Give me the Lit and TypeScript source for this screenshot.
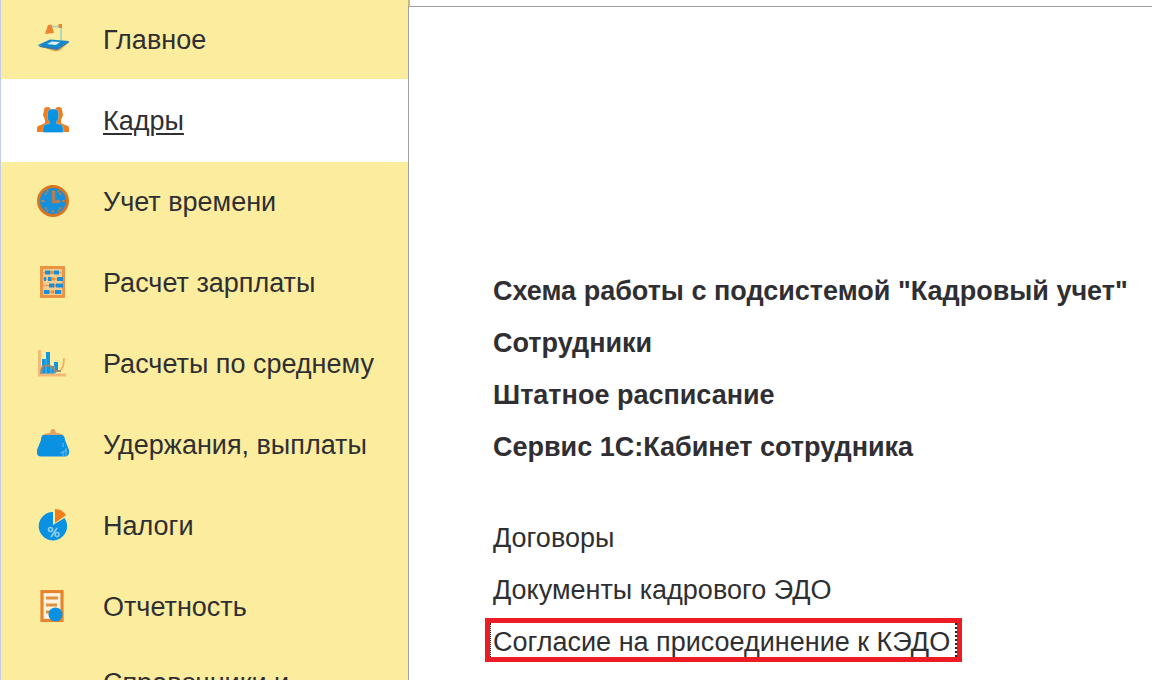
import { LitElement, html, svg, css } from "lit";
import { customElement, property, state } from "lit/decorators.js";

const icons: Record<string, unknown> = {
  main: svg`
    <path d="M2 23 18 28.500 23 27.500 31 20 24 23Z" fill="#d9a45a"/>
    <path d="M1 22 13 16.500 32 18 20 26Z" fill="#1488cf"/>
    <path d="M1 22 20 25.500 32 18V19.500L20 27 3 24Z" fill="#2a78a9"/>
    <path d="M10 21 15 18.500 23 19 19 22Z" fill="#dff2fb"/>
    <path d="M14 3.500H24V17" fill="none" stroke="#a3d0bd" stroke-width="1.600"/>
    <path d="M11 2 14.500 1.500 17 10 8 11Z" fill="#ea8433"/>
    <rect x="21.500" y="1" width="3.500" height="4" fill="#e88a35"/>`,
  people: svg`
    <path d="M7 6Q7 3 10.500 3Q14 3 14 7V15L16 18V28H0V24Q0 21.500 4 21L8 19V16L6 11ZM25 6Q25 3 21.500 3Q18 3 18 7V15L16 18V28H32V24Q32 21.500 28 21L24 19V16L26 11Z" fill="#f07d1e"/>
    <path d="M10.500 9Q10.500 5 16 5Q21.500 5 21.500 9V14Q21.500 16 19.500 17.500V19.500L24 20.500Q26 21.500 26 24V28.500H6V24Q6 21.500 8 20.500L12.500 19.500V17.500Q10.500 16 10.500 14Z" fill="#0b93e3" stroke="#fff" stroke-opacity=".3" stroke-width=".8"/>`,
  clock: svg`
    <circle cx="16" cy="16" r="14.500" fill="#1590dc" stroke="#d87520" stroke-width="3"/>
    <path d="M16.500 5.500V16.500H23" fill="none" stroke="#b08055" stroke-width="3.400"/>
    <path d="M16 25V28M4 16H7.500M25 16H28M8 8 9.500 9.500M24 8 22.500 9.500M8 24 9.500 22.500M24 24 22.500 22.500M10 5 11 7.500M22 5 21 7.500M10 27 11 24.500M22 27 21 24.500" stroke="#b08055" stroke-width="1.900"/>`,
  abacus: svg`
    <rect x="4.500" y="1.500" width="22" height="29" fill="#f7cd8e" stroke="#ec9445" stroke-width="3"/>
    <path d="M6 6.500H26M6 13H26M6 19.500H26M6 26H26" stroke="#e9a663" stroke-width="1.500"/>
    <path d="M8 6.500H13.500M17 6.500H22M7 13H9M11 13H14.500M20 13H26M12 19.500H17.500M19 19.500H26M7 26H12.500M18 26H24" stroke="#168fdc" stroke-width="4"/>
    <path d="M13.500 6.500H17M15 13H18M17 19.500H19M14 26H17" stroke="#ee9238" stroke-width="3"/>`,
  chart: svg`
    <path d="M5 27V12H9V5H13V19H17V15H21V24L17 27Z" fill="#0f96e4"/>
    <path d="M9 12V27M14 19V27M17.500 19V26" stroke="#5fb5d2" stroke-width="1"/>
    <path d="M2.500 3V28H29" fill="none" stroke="#f5b975" stroke-width="3"/>
    <path d="M4 27Q4 18 10 18.500T18 24H24" fill="none" stroke="#a08a6a" stroke-width="2"/>
    <path d="M24 23Q27 19 27 11" fill="none" stroke="#f5b05e" stroke-width="1.800"/>`,
  purse: svg`
    <path d="M5 9Q6 5 13 5L14 2Q16 0 18 2L19 5Q26 5 27 9Z" fill="#e8a062"/>
    <path d="M6 7H25Q28 8 28 12L32 22Q33 28 28 28.500H4Q-1 28 0 22L4 12Q4 8 6 7Z" fill="#0b91e1"/>
    <path d="M26 15V19M29 20V28M23.500 25 30 22M26 23V28" stroke="#5db5e0" stroke-width="1.300"/>`,
  taxes: svg`
    <path d="M16 3V16L27.500 9A14.200 14.200 0 1 1 16 3Z" fill="#0b91e1"/>
    <path d="M18 0Q25 0 29 6L18 14Z" fill="#f07c1c"/>
    <path d="M20 19 14 28" stroke="#8fcdec" stroke-width="1.600"/>
    <circle cx="13.500" cy="20.500" r="2" fill="none" stroke="#8fcdec" stroke-width="1.600"/>
    <circle cx="20" cy="25.500" r="2" fill="none" stroke="#8fcdec" stroke-width="1.600"/>`,
  report: svg`
    <rect x="5" y="1.500" width="20" height="29" fill="#fff3df" stroke="#e8842d" stroke-width="3.200"/>
    <path d="M9 8H21M9 15H20M9 22H16" stroke="#e0903f" stroke-width="3"/>
    <circle cx="18.500" cy="24.500" r="7" fill="#0b91e1"/>`,
};

@customElement("section-link")
class SectionLink extends LitElement {
  @property() label = "";
  @property() icon = "";
  @property({ type: Boolean, reflect: true }) active = false;

  static styles = css`
    :host {
      display: block;
      margin-top: -2px;
    }
    .item {
      display: flex;
      box-sizing: border-box;
      min-height: 83px;
      padding: 20px 16px 21px 36px;
      gap: 34px;
      align-items: center;
      color: #2f2f33;
      font-size: 27px;
      line-height: 31px;
      text-decoration: none;
    }
    .icon {
      flex: none;
      width: 32px;
      height: 32px;
    }
    .label {
      padding-top: 2px;
    }
    :host([active]) .item {
      background: #fff;
      text-decoration: underline;
      text-decoration-thickness: 2px;
      text-underline-offset: 3px;
    }
  `;

  render() {
    return html`<a class="item" href="#${this.icon}" aria-current=${this.active ? "page" : "false"}>
      <svg class="icon" viewBox="0 0 32 32" aria-hidden="true">${icons[this.icon]}</svg>
      <span class="label">${this.label}</span>
    </a>`;
  }
}

@customElement("app-root")
class AppRoot extends LitElement {
  @state() private current = "people";

  private sections = [
    ["main", "Главное"],
    ["people", "Кадры"],
    ["clock", "Учет времени"],
    ["abacus", "Расчет зарплаты"],
    ["chart", "Расчеты по среднему"],
    ["purse", "Удержания, выплаты"],
    ["taxes", "Налоги"],
    ["report", "Отчетность"],
    ["settings", "Справочники и настройки"],
  ];

  private primary = [
    "Схема работы с подсистемой \"Кадровый учет\"",
    "Сотрудники",
    "Штатное расписание",
    "Сервис 1С:Кабинет сотрудника",
  ];

  private secondary = ["Договоры", "Документы кадрового ЭДО", "Согласие на присоединение к КЭДО"];

  static styles = css`
    :host {
      display: grid;
      grid-template-columns: 408px minmax(0, 1fr);
      height: 100vh;
      overflow: hidden;
      background: #fff;
      color: #2f2f33;
      font-family: "Liberation Sans", Arial, sans-serif;
      font-size: 27px;
      line-height: 31px;
    }
    .sections {
      min-height: 0;
      overflow: hidden;
      border-left: 1px solid #c5cde6;
      background: #fbec9e;
    }
    .workspace {
      display: flex;
      flex-direction: column;
      min-width: 0;
      min-height: 0;
    }
    .strip {
      flex: none;
      height: 6px;
      border-left: 2px solid #c9b97a;
    }
    .panel {
      flex: 1;
      min-height: 0;
      overflow: hidden;
      border: solid #a0a0a0;
      border-width: 1px 0 0 1px;
      padding: 258px 0 0 84px;
    }
    .list {
      margin: 0 0 39px;
      padding: 0;
      list-style: none;
    }
    .row {
      display: flex;
      align-items: center;
      height: 52px;
      white-space: nowrap;
    }
    .strong {
      font-weight: 700;
    }
    .link {
      color: inherit;
      text-decoration: none;
    }
    .marked {
      margin: 0 0 4px -8px;
      border: 5px solid #ed1c24;
    }
    .focus {
      display: block;
      padding: 4px 5px 0 2px;
      border: dotted #222;
      border-width: 0 2px 0 1px;
      line-height: 30px;
    }
  `;

  render() {
    return html`
      <nav class="sections" aria-label="Разделы">
        ${this.sections.map(
          ([icon, label]) =>
            html`<section-link .icon=${icon} .label=${label} ?active=${icon === this.current}></section-link>`,
        )}
      </nav>
      <main class="workspace">
        <div class="strip"></div>
        <div class="panel">
          <ul class="list strong">
            ${this.primary.map((t) => html`<li class="row"><a class="link" href="#">${t}</a></li>`)}
          </ul>
          <ul class="list">
            ${this.secondary.map((t, i) =>
              i === 2
                ? html`<li class="row"><a class="link marked" href="#"><span class="focus">${t}</span></a></li>`
                : html`<li class="row"><a class="link" href="#">${t}</a></li>`,
            )}
          </ul>
        </div>
      </main>
    `;
  }
}
